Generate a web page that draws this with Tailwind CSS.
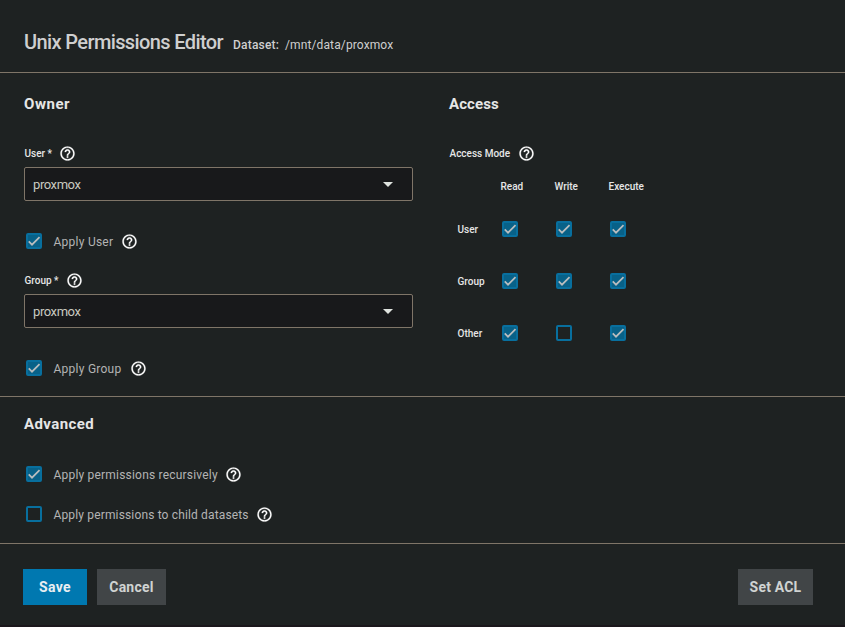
<!DOCTYPE html>
<html lang="en">
<head>
<meta charset="utf-8">
<title>Unix Permissions Editor</title>
<script src="https://cdn.jsdelivr.net/npm/@tailwindcss/browser@4"></script>
</head>
<body class="w-[845px] h-[627px] overflow-hidden bg-[#1e2222] font-['Roboto',sans-serif] text-[#e6e6e6]">
<svg class="hidden">
  <symbol id="help" viewBox="0 0 24 24"><path fill="currentColor" stroke="currentColor" stroke-width=".3" d="M11 18h2v-2h-2v2zm1-16C6.480 2 2 6.480 2 12s4.480 10 10 10 10-4.480 10-10S17.520 2 12 2zm0 18c-4.410 0-8-3.590-8-8s3.590-8 8-8 8 3.590 8 8-3.590 8-8 8zm0-14c-2.210 0-4 1.790-4 4h2c0-1.100.900-2 2-2s2 .900 2 2c0 2-3 1.750-3 5h2c0-2.250 3-2.500 3-5 0-2.210-1.790-4-4-4z"/></symbol>
  <symbol id="check" viewBox="0 0 24 24"><path fill="none" stroke="#b9bdbf" stroke-width="2.6" d="M4.100 12.700 9 17.600 20.300 6.300"/></symbol>
</svg>
<div class="flex flex-col h-full border-b-2 border-[#1b171c]">
  <header class="h-[73px] shrink-0 border-b border-[#7f7568] pl-6 pt-[28px] flex items-baseline leading-7 text-[#cfcfcf]">
    <h1 class="w-[209px] whitespace-nowrap text-[20px] font-medium tracking-[-0.61px]">Unix Permissions Editor</h1>
    <span class="w-[52px] whitespace-nowrap text-[12px] font-medium tracking-[0.2px]">Dataset:</span>
    <span class="whitespace-nowrap text-[12px] tracking-[0.12px]">/mnt/data/proxmox</span>
  </header>

  <main class="h-[324px] shrink-0 border-b border-[#7f7568] flex pl-6">
    <section class="w-[389px] mr-9 pt-[21px]">
      <h2 class="h-5 leading-5 text-[15px] font-bold tracking-[0.55px]">Owner</h2>
      <div class="mt-[30px] h-[18px] flex items-center text-[10px] font-medium"><span class="w-[34.500px] pl-[0.500px]">User *</span><svg class="size-[17px] text-white"><use href="#help"/></svg></div>
      <div class="mt-[5px] h-[34px] border border-[#7f7568] rounded-xs bg-[#18191b] flex items-center justify-between pl-2 pr-[19px] text-[13px] text-[#c9c9c0]"><span class="pt-0.5 tracking-[-0.42px]">proxmox</span><svg class="w-[10px] h-[5px]"><path d="M0 0h10L5 5z" fill="#dfe3df"/></svg></div>
      <div class="mt-[31px] h-[18px] pl-0.5 flex items-center text-[12px] text-[#b4b4b4]"><span class="size-4 mr-[11px] rounded-xs bg-[#086188] border-2 border-[#086f9e] flex items-center justify-center"><svg class="size-4 shrink-0"><use href="#check"/></svg></span><span class="w-[68px] pt-0.5 pl-[0.500px] tracking-[0.25px]">Apply User</span><svg class="size-[17px] text-white"><use href="#help"/></svg></div>
      <div class="mt-[21px] h-[18px] flex items-center text-[10px] font-medium"><span class="w-[41.500px] pl-[0.500px]">Group *</span><svg class="size-[17px] text-white"><use href="#help"/></svg></div>
      <div class="mt-[5px] h-[34px] border border-[#7f7568] rounded-xs bg-[#18191b] flex items-center justify-between pl-2 pr-[19px] text-[13px] text-[#c9c9c0]"><span class="pt-0.5 tracking-[-0.42px]">proxmox</span><svg class="w-[10px] h-[5px]"><path d="M0 0h10L5 5z" fill="#dfe3df"/></svg></div>
      <div class="mt-[31px] h-[18px] pl-0.5 flex items-center text-[12px] text-[#b4b4b4]"><span class="size-4 mr-[11px] rounded-xs bg-[#086188] border-2 border-[#086f9e] flex items-center justify-center"><svg class="size-4 shrink-0"><use href="#check"/></svg></span><span class="w-[76.500px] pt-0.5 pl-[0.500px] tracking-[0.25px]">Apply Group</span><svg class="size-[17px] text-white"><use href="#help"/></svg></div>
    </section>
    <section class="pt-[21px]">
      <h2 class="h-5 leading-5 text-[15px] font-bold tracking-[0.1px]">Access</h2>
      <div class="mt-[30px] h-[18px] flex items-center text-[10px] font-medium"><span class="w-[68.500px] pl-[0.500px]">Access Mode</span><svg class="size-[17px] text-white"><use href="#help"/></svg></div>
      <div class="mt-[14px] grid grid-cols-[43px_54px_54px_54px] grid-rows-[20px] auto-rows-[52px] items-center pl-[8.500px] text-[10px] font-medium">
        <span></span><span>Read</span><span>Write</span><span>Execute</span>
        <span class="mt-[14px]">User</span>
        <span class="mt-[14px] ml-[1.500px] size-4 rounded-xs bg-[#086188] border-2 border-[#086f9e] flex items-center justify-center"><svg class="size-4 shrink-0"><use href="#check"/></svg></span>
        <span class="mt-[14px] ml-[1.500px] size-4 rounded-xs bg-[#086188] border-2 border-[#086f9e] flex items-center justify-center"><svg class="size-4 shrink-0"><use href="#check"/></svg></span>
        <span class="mt-[14px] ml-[1.500px] size-4 rounded-xs bg-[#086188] border-2 border-[#086f9e] flex items-center justify-center"><svg class="size-4 shrink-0"><use href="#check"/></svg></span>
        <span class="mt-[14px]">Group</span>
        <span class="mt-[14px] ml-[1.500px] size-4 rounded-xs bg-[#086188] border-2 border-[#086f9e] flex items-center justify-center"><svg class="size-4 shrink-0"><use href="#check"/></svg></span>
        <span class="mt-[14px] ml-[1.500px] size-4 rounded-xs bg-[#086188] border-2 border-[#086f9e] flex items-center justify-center"><svg class="size-4 shrink-0"><use href="#check"/></svg></span>
        <span class="mt-[14px] ml-[1.500px] size-4 rounded-xs bg-[#086188] border-2 border-[#086f9e] flex items-center justify-center"><svg class="size-4 shrink-0"><use href="#check"/></svg></span>
        <span class="mt-[14px]">Other</span>
        <span class="mt-[14px] ml-[1.500px] size-4 rounded-xs bg-[#086188] border-2 border-[#086f9e] flex items-center justify-center"><svg class="size-4 shrink-0"><use href="#check"/></svg></span>
        <span class="mt-[14px] ml-[1.500px] size-4 rounded-xs border-2 border-[#086f9e]"></span>
        <span class="mt-[14px] ml-[1.500px] size-4 rounded-xs bg-[#086188] border-2 border-[#086f9e] flex items-center justify-center"><svg class="size-4 shrink-0"><use href="#check"/></svg></span>
      </div>
    </section>
  </main>

  <section class="h-[147px] shrink-0 border-b border-[#7f7568] pl-6 pt-[17px]">
    <h2 class="h-5 leading-5 text-[15px] font-bold tracking-[0.4px]">Advanced</h2>
    <div class="mt-[31px] h-[18px] pl-0.5 flex items-center text-[12px] text-[#b4b4b4]"><span class="size-4 mr-[11px] rounded-xs bg-[#086188] border-2 border-[#086f9e] flex items-center justify-center"><svg class="size-4 shrink-0"><use href="#check"/></svg></span><span class="w-[172px] pt-0.5 pl-[0.500px] whitespace-nowrap tracking-[0.2px]">Apply permissions recursively</span><svg class="size-[17px] text-white"><use href="#help"/></svg></div>
    <div class="mt-[22px] h-[18px] pl-0.5 flex items-center text-[12px] text-[#b4b4b4]"><span class="size-4 mr-[11px] rounded-xs border-2 border-[#086f9e]"></span><span class="w-[203px] pt-0.5 pl-[0.500px] whitespace-nowrap tracking-[0.15px]">Apply permissions to child datasets</span><svg class="size-[17px] text-white"><use href="#help"/></svg></div>
  </section>

  <footer class="pt-[25px] pl-[23px] pr-8 flex text-[14px] font-bold text-[#d0d3d2]">
    <button class="w-16 h-9 bg-[#0078b0] text-[#e8eef2] tracking-[0.3px]">Save</button>
    <button class="ml-[10px] w-[69px] h-9 bg-[#414547] tracking-[0.25px]">Cancel</button>
    <button class="ml-auto w-[75px] h-9 bg-[#414547] tracking-[0.2px]">Set ACL</button>
  </footer>
</div>
</body>
</html>
